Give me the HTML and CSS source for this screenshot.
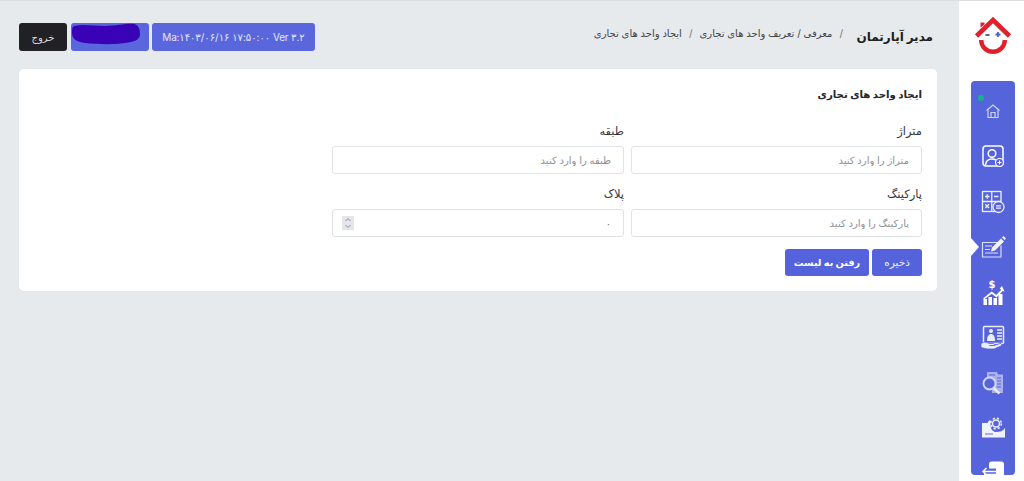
FILE: index.html
```html
<!DOCTYPE html>
<html lang="fa">
<head>
<meta charset="utf-8">
<title>ایجاد واحد های تجاری</title>
<link rel="stylesheet" href="styles.css">
</head>
<body>
<div class="app">
  <main class="main">
    <header class="topbar">
      <div class="actions">
        <button class="btn btn-dark" type="button">خروج</button>
        <div class="btn btn-user">
          <svg class="scribble" viewBox="0 0 70 22" width="70" height="22"><path fill="#3a02b6" d="M3 3C12 1 22 3 34 3C46 3 56 0 63 1C68 2 69 7 69 11C69 17 63 19 54 20C40 22 26 21 14 20C6 19 1 16 1 10C1 6 1 4 3 3Z"/></svg>
        </div>
        <div class="btn btn-version">Ma:۱۴۰۳/۰۶/۱۶ ۱۷:۵۰:۰۰ Ver ۳.۲</div>
      </div>
      <nav class="crumbs">
        <span class="logo">مدیر آپارتمان</span>
        <span class="crumb-sep">/</span>
        <span>معرفی / تعریف واحد های تجاری</span>
        <span class="crumb-sep">/</span>
        <span>ایجاد واحد های تجاری</span>
      </nav>
    </header>

    <section class="card">
      <h1 class="card-title">ایجاد واحد های تجاری</h1>
      <form class="form-grid">
        <div class="field">
          <label class="field-label">متراژ</label>
          <input class="field-input" type="text" placeholder="متراژ را وارد کنید">
        </div>
        <div class="field">
          <label class="field-label">طبقه</label>
          <input class="field-input" type="text" placeholder="طبقه را وارد کنید">
        </div>
        <div class="field">
          <label class="field-label">پارکینگ</label>
          <input class="field-input" type="text" placeholder="پارکینگ را وارد کنید">
        </div>
        <div class="field">
          <label class="field-label">پلاک</label>
          <div class="number-wrap">
            <input class="field-input field-number" type="text" value="۰">
            <span class="spinner">
              <svg viewBox="0 0 12 14" width="12" height="14"><path d="M3.500 5 6 2.500 8.500 5M3.500 9 6 11.500 8.500 9" fill="none" stroke="#8b8f98" stroke-width="1"/></svg>
            </span>
          </div>
        </div>
      </form>
      <div class="form-actions">
        <button class="btn btn-primary btn-save" type="button">ذخیره</button>
        <button class="btn btn-primary btn-list" type="button">رفتن به لیست</button>
      </div>
    </section>
  </main>

  <aside class="sidebar">
    <div class="brand">
      <svg viewBox="0 0 38 38" width="38" height="38">
        <path d="M2.500 19 19 3 35.500 19" fill="none" stroke="#e0212b" stroke-width="4.600" stroke-linejoin="miter"/>
        <path d="M6.500 10.500V5.500H10.500V7.500Z" fill="#e0212b"/>
        <path d="M7.200 23A11.800 11.800 0 1 0 30.800 23" fill="none" stroke="#e0212b" stroke-width="4.400"/>
        <path d="M11.500 18H15.500" stroke="#44537f" stroke-width="1.800"/>
        <path d="M21.500 17.500H26.500M24 15V20" stroke="#4a60c8" stroke-width="1.800"/>
      </svg>
    </div>
    <div class="rail">
      <span class="status-dot"></span>
      <span class="pointer"></span>
      <ul class="rail-list">
        <li class="rail-item">
          <svg class="home" viewBox="0 0 30 30" width="30" height="30"><g fill="none" stroke="#cdd3f5" stroke-width="1.200"><path d="M8.500 14.500 15 9l6.500 5.500"/><path d="M10 13.500V21.500H20V13.500"/><path d="M13 21.500V16.500H17V21.500"/></g></svg>
        </li>
        <li class="rail-item">
          <svg viewBox="0 0 30 30" width="30" height="30"><g fill="none" stroke="#fff" stroke-width="1.500"><rect x="5" y="5" width="20" height="20" rx="3"/><circle cx="14" cy="12.500" r="3.800"/><path d="M7.500 24C8 19.500 11 18 14 18C15.500 18 17 18.500 18 19.200"/></g><circle cx="21.500" cy="21.500" r="4" fill="#5664dc" stroke="#fff" stroke-width="1.200"/><path d="M19.500 21.500H23.500M21.500 19.500V23.500" stroke="#fff" stroke-width="1"/></svg>
        </li>
        <li class="rail-item">
          <svg viewBox="0 0 30 30" width="30" height="30"><g fill="none" stroke="#eef0fc" stroke-width="1.300"><rect x="4.500" y="4.500" width="18.500" height="20"/><path d="M13.750 4.500V24.500M4.500 14.500H23"/></g><path d="M7 9.500H11.500M9.250 7.250V11.750M16 9.500H20.500M7.300 17.300 11 21M11 17.300 7.300 21" stroke="#eef0fc" stroke-width="1.300"/><circle cx="20.500" cy="20" r="5.500" fill="#5664dc" stroke="#eef0fc" stroke-width="1.300"/><path d="M18 18.800H23M18 21.200H23" stroke="#eef0fc" stroke-width="1.200"/></svg>
        </li>
        <li class="rail-item">
          <svg viewBox="0 0 30 30" width="30" height="30"><g fill="none" stroke="#d9ddf8" stroke-width="1.200"><path d="M20 10.500H4.500V25H23V13.500"/><path d="M7 14H14M7 17.500H12M7 21H20"/></g><path d="M13 19.500 14 15.500 23 6.500 26 9.500 17 18.500Z" fill="#f2f3fd"/><path d="M24 5.500 25.500 4 28 6.500 26.600 8Z" fill="#f2f3fd"/></svg>
        </li>
        <li class="rail-item">
          <svg viewBox="0 0 30 30" width="30" height="30"><g fill="#fff"><path d="M5.500 22h3.500v6H5.500zM10.500 20h3.500v8h-3.500zM15.500 21h3.500v7h-3.500zM20.500 17h4v11h-4z"/><path d="M24 9l2.500 5.500-1.800-.6-6.200 6.600-4.800-3.800-7.500 5.800-1-1.200 8.500-6.800 4.600 3.600 5-5.300-1.600-1.400z"/></g><text class="dollar" x="14" y="11" text-anchor="middle">$</text></svg>
        </li>
        <li class="rail-item">
          <svg viewBox="0 0 30 30" width="30" height="30"><rect x="5.500" y="4.500" width="20" height="17" rx="1" fill="none" stroke="#eceefb" stroke-width="1.500"/><circle cx="13" cy="9" r="2" fill="#eceefb"/><path d="M9 19C9 14 11 12 13 12C15.500 12 17 14 17 19Z" fill="#eceefb"/><path d="M19 8H24M19 11H24M19 14H24M19 17H24" stroke="#eceefb" stroke-width="1.300"/><path d="M3 21.500C6 19.500 8.500 20 11 21.500H15C17 21.500 17 23.500 15 23.500H11.500H16L22 21.500C23.500 21 24.500 23 23 24L16 27H9L3 25.500Z" fill="#eceefb" stroke="#5664dc" stroke-width=".8"/></svg>
        </li>
        <li class="rail-item">
          <svg viewBox="0 0 30 30" width="30" height="30"><path d="M9 4H19L20 6.500H25V25H14V21H9Z" fill="#a9b1ec"/><path d="M11 7H17M19 10H23M19 13H23M19 16H23M19 19H23" stroke="#5664dc" stroke-width="1.200"/><circle cx="11.500" cy="15.500" r="6" fill="#5664dc" stroke="#d5d9f6" stroke-width="1.800"/><path d="M15.500 20 21.500 25.500" stroke="#e8eafa" stroke-width="2.500"/></svg>
        </li>
        <li class="rail-item">
          <svg viewBox="0 0 30 30" width="30" height="30"><path d="M4 10H9.500L11 7.500H12.500V12C12.500 16.500 15.500 19 18 19C22 19 25 18 27 15V24.500H4Z" fill="#f0f2fc"/><path d="M7 21H15" stroke="#a9b1ec" stroke-width="2"/><circle cx="18" cy="10.500" r="3.500" fill="none" stroke="#eceefb" stroke-width="1.500"/><circle cx="18" cy="10.500" r="5.300" fill="none" stroke="#eceefb" stroke-width="1.600" stroke-dasharray="2.200 2"/></svg>
        </li>
        <li class="rail-item">
          <svg viewBox="0 0 30 30" width="30" height="30"><path d="M11 6C11 4.500 12 3.500 13.500 3.500H23.500C25 3.500 26 4.500 26 6V30H11V16H18V10.500H11Z" fill="#fff"/><path d="M19 13.500H5M8.500 10 5 13.500 8.500 17M6 16.500H19" fill="none" stroke="#fff" stroke-width="1.500"/></svg>
        </li>
      </ul>
    </div>
  </aside>
</div>
</body>
</html>
```

FILE: styles.css
```css
* { box-sizing: border-box; }

html, body {
  margin: 0;
  height: 100%;
  overflow: hidden;
}

body {
  font-family: Inter, "DejaVu Sans", sans-serif;
  color: #212529;
  background: #e7eaed;
}

.app {
  display: flex;
  height: 481px;
  border-top: 1px solid #dcdee2;
}

.main {
  flex: 1;
  min-width: 0;
  padding: 22px 22px 0 19px;
}

.topbar {
  display: flex;
  justify-content: space-between;
  height: 28px;
  margin-bottom: 18px;
}

.actions {
  display: flex;
  gap: 3px;
}

.btn {
  display: flex;
  align-items: center;
  justify-content: center;
  border: 0;
  border-radius: 3px;
  font-family: Inter, "DejaVu Sans", sans-serif;
  color: #fff;
  padding: 0;
}

.btn-dark {
  width: 48px;
  margin-right: 1px;
  background: #212125;
  color: #dcdcde;
  font-size: 10px;
  direction: rtl;
}

.btn-user {
  width: 78px;
  background: #5a67dc;
}

.scribble {
  margin: -7px 8px 0 0;
}

.btn-version {
  width: 163px;
  background: #5a67dc;
  color: #e3e6fb;
  font-size: 10px;
  letter-spacing: -.2px;
  direction: ltr;
}

.crumbs {
  display: flex;
  direction: rtl;
  align-items: center;
  gap: 5px;
  height: 20px;
  padding-right: 4px;
  font-size: 10px;
  color: #3f4348;
  white-space: nowrap;
}

.logo {
  width: 75px;
  margin: 6px 0 0 8px;
  font-size: 12px;
  font-weight: 700;
  color: #1d1e22;
}

.crumb-sep {
  color: #6c7177;
  padding: 0 2px;
}

.card {
  height: 222px;
  padding: 17px 15px 0;
  background: #fff;
  border-radius: 5px;
  direction: rtl;
}

.card-title {
  margin: 0 0 22px;
  font-size: 10.200px;
  line-height: 16px;
  font-weight: 700;
  color: #24262b;
}

.form-grid {
  display: grid;
  grid-template-columns: 291px 292px;
  column-gap: 7px;
  row-gap: 13.500px;
}

.field {
  display: flex;
  flex-direction: column;
}

.field-label {
  height: 14px;
  margin-bottom: 8px;
  font-size: 11.500px;
  line-height: 14px;
  font-weight: 500;
  color: #33373c;
}

.field-input {
  display: block;
  width: 100%;
  height: 27.500px;
  padding: 0 12px;
  border: 1px solid #dfe2e6;
  border-radius: 3px;
  background: #fff;
  font-family: Inter, "DejaVu Sans", sans-serif;
  font-size: 10px;
  color: #6f747a;
  outline: 0;
  direction: rtl;
}

.field-input::placeholder {
  color: #8c9096;
  opacity: 1;
}

.number-wrap {
  position: relative;
}

.spinner {
  position: absolute;
  left: 10px;
  top: 7px;
  display: block;
  width: 12px;
  height: 14px;
  background: #e5e6ec;
}

.spinner svg {
  display: block;
}

.form-actions {
  display: flex;
  gap: 3px;
  margin-top: 12.500px;
}

.btn-primary {
  height: 27px;
  background: #5462dc;
  font-size: 10.500px;
  color: #f2f3fd;
}

.btn-save { width: 50px; }

.btn-list {
  width: 84px;
  font-size: 9.700px;
  font-weight: 700;
  color: #fff;
}

.sidebar {
  flex: 0 0 65px;
  background: #fff;
  padding: 0 9px 0 12px;
}

.brand {
  height: 80px;
  padding: 16px 0 0 3px;
}

.brand svg {
  display: block;
}

.rail {
  position: relative;
  height: 394px;
  background: #5664dc;
  border-radius: 4px;
  overflow: hidden;
}

.status-dot {
  position: absolute;
  left: 7px;
  top: 14px;
  width: 6px;
  height: 6px;
  border-radius: 50%;
  background: #17b28a;
}

.pointer {
  position: absolute;
  left: 0;
  top: 157px;
  width: 0;
  height: 0;
  border-top: 9px solid transparent;
  border-bottom: 9px solid transparent;
  border-left: 8px solid #fff;
}

.rail-list {
  display: flex;
  flex-direction: column;
  align-items: center;
  gap: 15.300px;
  margin: 0;
  padding: 15px 0 0;
  list-style: none;
}

.rail-item {
  flex: 0 0 30px;
  height: 30px;
}

.rail-item svg {
  display: block;
}

.dollar {
  font-family: "DejaVu Sans", sans-serif;
  font-size: 10px;
  font-weight: 700;
  fill: #fff;
}
```
